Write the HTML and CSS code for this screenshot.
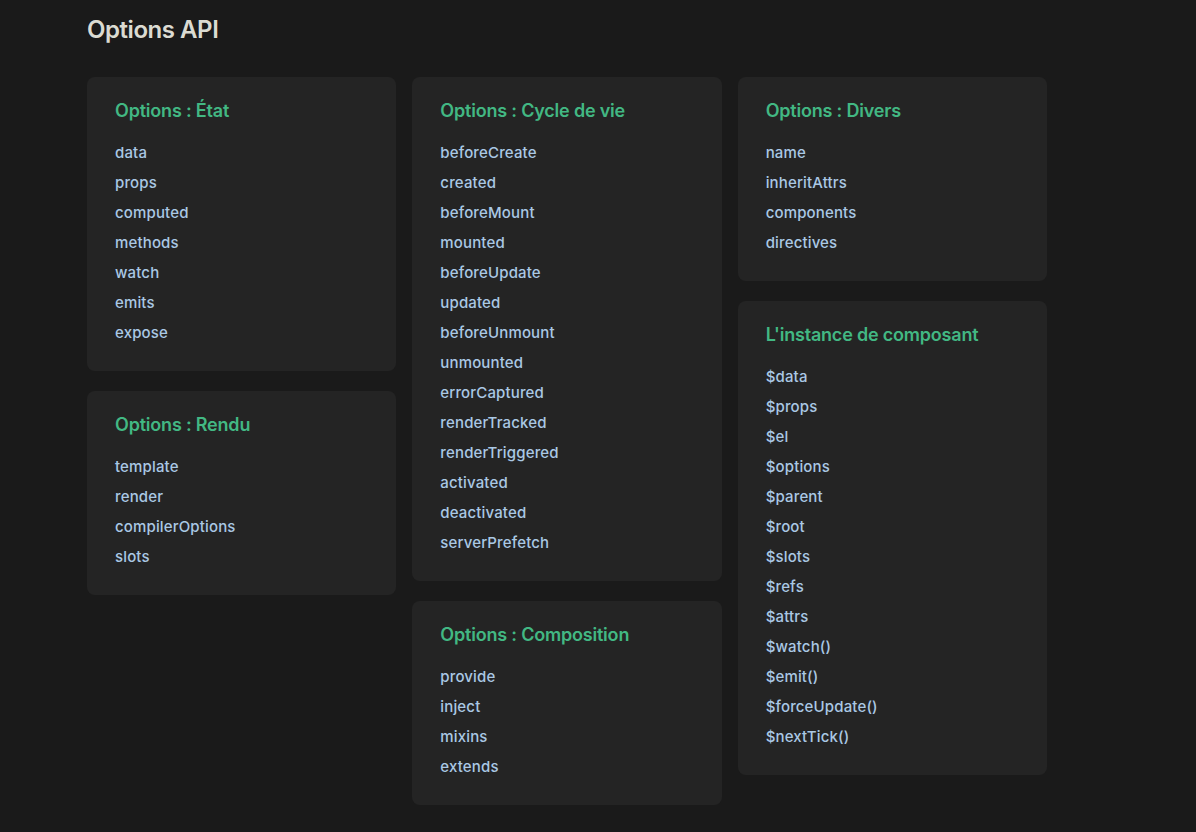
FILE: index.html
```html
<!DOCTYPE html>
<html lang="fr">
<head>
<meta charset="utf-8">
<title>Options API</title>
<link rel="stylesheet" href="styles.css">
</head>
<body>
<main class="page">
  <h2 class="section-title">Options API</h2>
  <div class="groups">
    <div class="col">
      <section class="group">
        <h3>Options : État</h3>
        <ul>
          <li><a>data</a></li>
          <li><a>props</a></li>
          <li><a>computed</a></li>
          <li><a>methods</a></li>
          <li><a>watch</a></li>
          <li><a>emits</a></li>
          <li><a>expose</a></li>
        </ul>
      </section>
      <section class="group">
        <h3>Options : Rendu</h3>
        <ul>
          <li><a>template</a></li>
          <li><a>render</a></li>
          <li><a>compilerOptions</a></li>
          <li><a>slots</a></li>
        </ul>
      </section>
    </div>
    <div class="col">
      <section class="group">
        <h3>Options : Cycle de vie</h3>
        <ul>
          <li><a>beforeCreate</a></li>
          <li><a>created</a></li>
          <li><a>beforeMount</a></li>
          <li><a>mounted</a></li>
          <li><a>beforeUpdate</a></li>
          <li><a>updated</a></li>
          <li><a>beforeUnmount</a></li>
          <li><a>unmounted</a></li>
          <li><a>errorCaptured</a></li>
          <li><a>renderTracked</a></li>
          <li><a>renderTriggered</a></li>
          <li><a>activated</a></li>
          <li><a>deactivated</a></li>
          <li><a>serverPrefetch</a></li>
        </ul>
      </section>
      <section class="group">
        <h3>Options : Composition</h3>
        <ul>
          <li><a>provide</a></li>
          <li><a>inject</a></li>
          <li><a>mixins</a></li>
          <li><a>extends</a></li>
        </ul>
      </section>
    </div>
    <div class="col">
      <section class="group">
        <h3>Options : Divers</h3>
        <ul>
          <li><a>name</a></li>
          <li><a>inheritAttrs</a></li>
          <li><a>components</a></li>
          <li><a>directives</a></li>
        </ul>
      </section>
      <section class="group">
        <h3>L'instance de composant</h3>
        <ul>
          <li><a>$data</a></li>
          <li><a>$props</a></li>
          <li><a>$el</a></li>
          <li><a>$options</a></li>
          <li><a>$parent</a></li>
          <li><a>$root</a></li>
          <li><a>$slots</a></li>
          <li><a>$refs</a></li>
          <li><a>$attrs</a></li>
          <li><a>$watch()</a></li>
          <li><a>$emit()</a></li>
          <li><a>$forceUpdate()</a></li>
          <li><a>$nextTick()</a></li>
        </ul>
      </section>
    </div>
  </div>
</main>
</body>
</html>
```
FILE: styles.css
```css
html, body {
  margin: 0;
  padding: 0;
  background: #1a1a1a;
}
body {
  font-family: Inter, "Noto Sans", sans-serif;
  -webkit-font-smoothing: antialiased;
}
.page {
  padding: 14px 0 0 87px;
  width: 960px;
}
.section-title {
  margin: 0 0 31px;
  font-size: 24px;
  line-height: 32px;
  font-weight: 600;
  color: rgba(255, 255, 245, 0.86);
  letter-spacing: -0.45px;
}
.groups {
  display: grid;
  grid-template-columns: repeat(3, 1fr);
  column-gap: 16px;
  align-items: start;
}
.col {
  display: flex;
  flex-direction: column;
  gap: 20px;
}
.group {
  background: #242424;
  border-radius: 8px;
  padding: 25px 28px 23px;
}
.group h3 {
  margin: 0 0 18px;
  font-size: 18px;
  line-height: 1;
  font-weight: 600;
  color: #42b883;
  letter-spacing: -0.2px;
}
.group ul {
  list-style: none;
  margin: 0;
  padding: 0;
}
.group a {
  font-size: 15px;
  line-height: 30px;
  font-weight: 500;
  color: #aac8e4;
  letter-spacing: 0.15px;
  cursor: pointer;
}
```
